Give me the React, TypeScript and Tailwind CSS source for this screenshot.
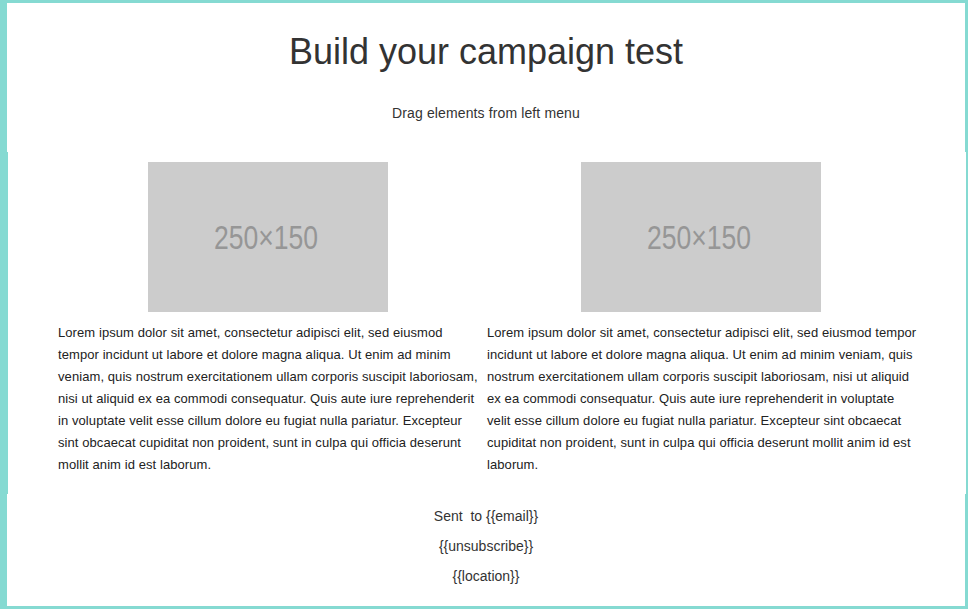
import React from 'react';

const leftLines = [
  'Lorem ipsum dolor sit amet, consectetur adipisci elit, sed eiusmod',
  'tempor incidunt ut labore et dolore magna aliqua. Ut enim ad minim',
  'veniam, quis nostrum exercitationem ullam corporis suscipit laboriosam,',
  'nisi ut aliquid ex ea commodi consequatur. Quis aute iure reprehenderit',
  'in voluptate velit esse cillum dolore eu fugiat nulla pariatur. Excepteur',
  'sint obcaecat cupiditat non proident, sunt in culpa qui officia deserunt',
  'mollit anim id est laborum.',
];

const rightLines = [
  'Lorem ipsum dolor sit amet, consectetur adipisci elit, sed eiusmod tempor',
  'incidunt ut labore et dolore magna aliqua. Ut enim ad minim veniam, quis',
  'nostrum exercitationem ullam corporis suscipit laboriosam, nisi ut aliquid',
  'ex ea commodi consequatur. Quis aute iure reprehenderit in voluptate',
  'velit esse cillum dolore eu fugiat nulla pariatur. Excepteur sint obcaecat',
  'cupiditat non proident, sunt in culpa qui officia deserunt mollit anim id est',
  'laborum.',
];

// gray placeholder image, like placehold.it
const Placeholder: React.FC = () => (
  <svg width="240" height="150" viewBox="0 0 240 150" className="block">
    <rect width="240" height="150" fill="#cccccc" />
    <text
      x="66"
      y="87"
      textLength="104"
      lengthAdjust="spacingAndGlyphs"
      fill="#969696"
      fontSize="34"
      fontFamily="'Liberation Sans', Arial, sans-serif"
    >
      250×150
    </text>
  </svg>
);

const Column: React.FC<{ lines: string[]; width: string }> = ({ lines, width }) => (
  <div className={`flex flex-col ${width}`}>
    <div className="flex justify-center">
      <Placeholder />
    </div>
    <p className="mt-[10px] text-[13px] leading-[22px] tracking-[0.08px] text-[#222]">
      {lines.map((l, i) => (
        <span key={i} className="block whitespace-nowrap">
          {l}
        </span>
      ))}
    </p>
  </div>
);

export default function App() {
  return (
    <div
      className="w-[968px] h-[609px] bg-[#85dad2] flex flex-col pt-[3px] pb-[3px] overflow-hidden"
      style={{ fontFamily: "'Liberation Sans', Arial, Helvetica, sans-serif" }}
    >
      {/* header */}
      <div className="ml-[7px] mr-[3px] bg-white pt-[31px] pb-[29px] text-center text-[#333]">
        <h1 className="text-[36px] leading-[36px] font-normal">Build your campaign test</h1>
        <p className="mt-[33px] text-[14px] leading-[20px] tracking-[0.12px]">Drag elements from left menu</p>
      </div>

      {/* two column block */}
      <div className="ml-[8px] mr-[2px] bg-white pt-[10px] pb-[18px] pl-[50px] flex gap-[9px]">
        <Column lines={leftLines} width="w-[420px]" />
        <Column lines={rightLines} width="w-[428px]" />
      </div>

      {/* footer */}
      <div className="ml-[7px] mr-[3px] flex-1 bg-white pt-[7px] pb-[15px] text-center text-[14px] leading-[30px] text-[#333]">
        <p className="whitespace-pre">Sent  to {'{{email}}'}</p>
        <p>{'{{unsubscribe}}'}</p>
        <p>{'{{location}}'}</p>
      </div>
    </div>
  );
}
